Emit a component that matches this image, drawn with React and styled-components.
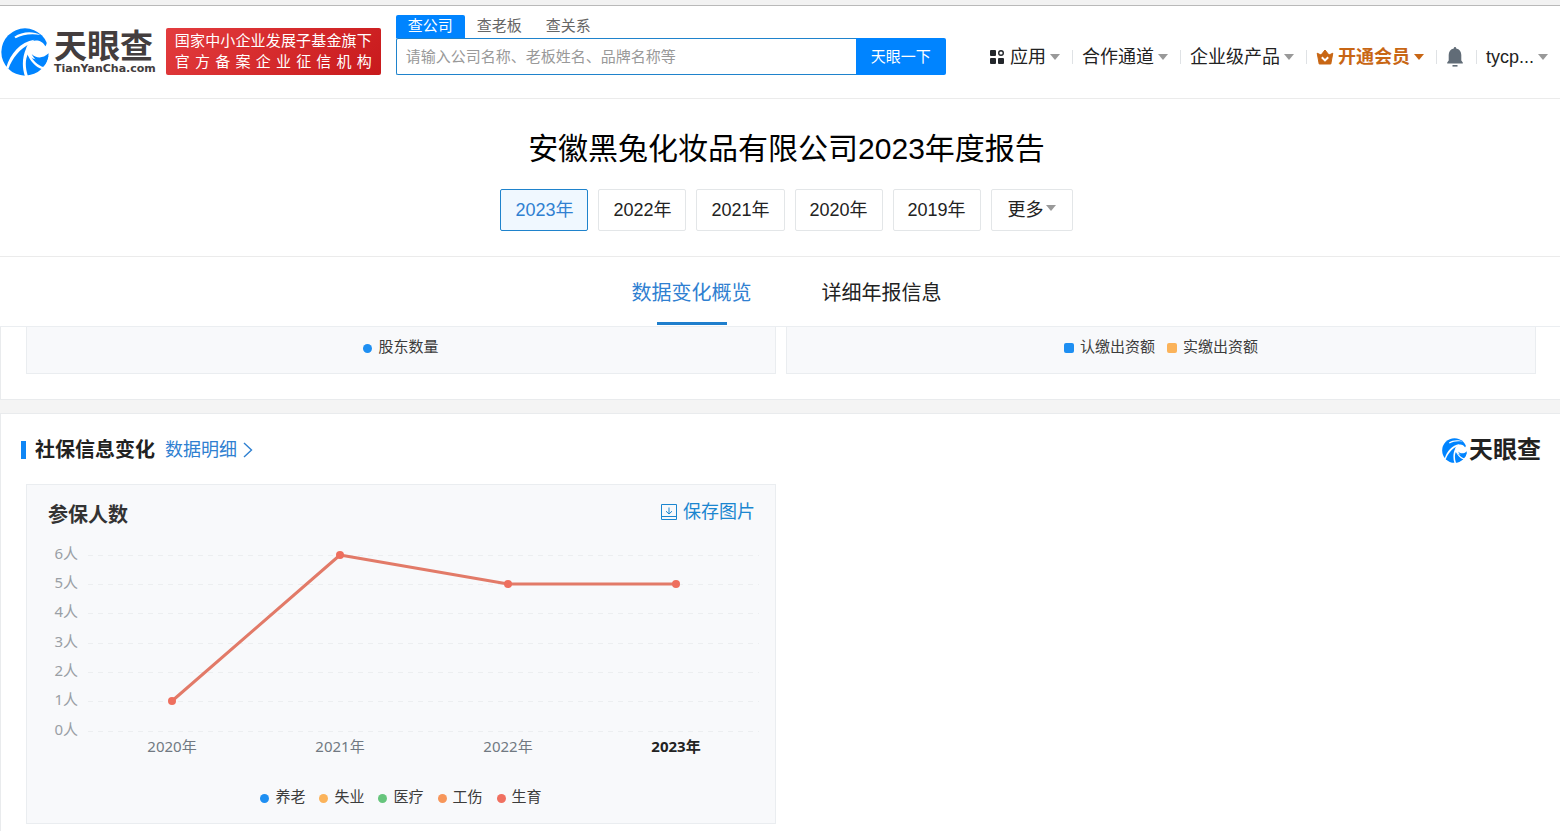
import React from "react";
import styled, { createGlobalStyle, css } from "styled-components";

const sans = `"Liberation Sans", "Noto Sans CJK SC", sans-serif`;
const noto = `"Noto Sans", "Noto Sans CJK SC", sans-serif`;

const GlobalStyle = createGlobalStyle`
  *, *::before, *::after { box-sizing: border-box; }
  html { scrollbar-width: none; }
  body { margin: 0; background: #f4f4f4; color: #222; font-family: ${sans}; }
  button, input { font-family: inherit; }
  button { cursor: pointer; }
  a { text-decoration: none; color: inherit; }
  h1, h2, h3, p, ul { margin: 0; padding: 0; }
  ul { list-style: none; }
  svg { display: block; flex: none; }
`;

const TopStrip = styled.div`
  height: 6px;
  background: #f2f2f2;
  border-bottom: 1px solid #b9b9b9;
`;

const Header = styled.header`
  display: flex;
  align-items: flex-end;
  padding: 9px 0 23px;
  background: #fff;
  border-bottom: 1px solid #ebebeb;
`;

const Brand = styled.a`
  display: flex;
  align-items: center;
  gap: 5px;
  height: 47px;
  padding-left: 1px;
`;

const BrandWords = styled.span`
  display: flex;
  flex-direction: column;
  padding-top: 3px;
  color: #433d3e;
`;

const BrandName = styled.span`
  font-size: 33px;
  line-height: 32px;
  font-weight: 700;
`;

const BrandDomain = styled.span`
  font: bold 11px/12px "DejaVu Sans", sans-serif;
`;

const Badge = styled.p`
  display: flex;
  flex-direction: column;
  width: 215px;
  height: 47px;
  margin-left: 10px;
  padding: 2px 9px;
  border-radius: 2px;
  background: linear-gradient(135deg, #e33c3e, #c81a1c);
  color: #fff;
  font-size: 15px;
  line-height: 21px;
  white-space: nowrap;
`;

const BadgeLine = styled.span`
  text-align: justify;
  text-align-last: justify;
`;

const Search = styled.form`
  width: 550px;
  margin-left: 15px;
`;

const SearchTabs = styled.div`
  display: flex;
`;

const SearchTab = styled.button`
  height: 23px;
  padding: 0 12px 2px;
  border: 0;
  border-radius: 2px 2px 0 0;
  background: ${(p) => (p.$active ? "#0084ff" : "transparent")};
  color: ${(p) => (p.$active ? "#fff" : "#666")};
  font-size: 15px;
  line-height: 21px;
`;

const SearchRow = styled.div`
  display: flex;
  height: 37px;
`;

const SearchInput = styled.input`
  flex: 1;
  min-width: 0;
  padding: 0 9px;
  border: 1px solid #1f83cc;
  border-right: 0;
  border-radius: 2px 0 0 2px;
  font-size: 15px;
  outline: 0;
  &::placeholder { color: #999; }
`;

const SearchButton = styled.button`
  width: 90px;
  padding: 0 0 2px;
  border: 0;
  border-radius: 0 2px 2px 0;
  background: #0084ff;
  color: #fff;
  font-size: 15px;
`;

const Nav = styled.nav`
  display: flex;
  align-items: center;
  height: 37px;
  margin-left: auto;
`;

const NavItem = styled.a`
  display: flex;
  align-items: center;
  gap: 4px;
  padding: 0 12px 0 9px;
  color: ${(p) => (p.$vip ? "#c86614" : "#222")};
  font-size: 18px;
  font-weight: ${(p) => (p.$vip ? 700 : 400)};
  line-height: 26px;
  white-space: nowrap;
`;

const Divider = styled.span`
  width: 1px;
  height: 14px;
  background: #dfe2e5;
`;

const Caret = styled.span`
  border: solid transparent;
  border-width: 6px 5px 0;
  border-top-color: ${(p) => (p.$vip ? "#c86614" : "#999")};
`;

const ReportHead = styled.section`
  display: flex;
  flex-direction: column;
  align-items: center;
  gap: 20px;
  padding: 30px 0 25px 13px;
  background: #fff;
  border-bottom: 1px solid #ebebeb;
`;

const ReportTitle = styled.h1`
  color: #000;
  font-size: 30px;
  font-weight: 400;
  line-height: 40px;
`;

const Years = styled.div`
  display: flex;
  gap: 10px;
`;

const YearButton = styled.button`
  display: flex;
  align-items: center;
  gap: 2px;
  height: 42px;
  padding: 0 ${(p) => (p.$more ? 16 : 14)}px 5px;
  border: 1px solid ${(p) => (p.$active ? "#1f83cc" : "#e3e6e8")};
  border-radius: 2px;
  background: ${(p) => (p.$active ? "#f0f8ff" : "#fff")};
  color: ${(p) => (p.$active ? "#2f80d1" : "#222")};
  font-size: 18px;
`;

const Tabs = styled.nav`
  display: flex;
  justify-content: center;
  gap: 70px;
  height: 70px;
  padding-left: 13px;
  background: #fff;
  border-bottom: 1px solid #ebeef1;
`;

const Tab = styled.a`
  display: flex;
  flex-direction: column;
  align-items: center;
  justify-content: space-between;
  padding: 21px 0 1px;
  color: ${(p) => (p.$active ? "#2f80d1" : "#222")};
  font-size: 20px;
  line-height: 30px;
  ${(p) =>
    p.$active &&
    css`
      &::after {
        content: "";
        width: 70px;
        height: 3px;
        background: #1f7fcd;
      }
    `}
`;

const Panel = styled.section`
  background: #fff;
  border: solid #e9ebed;
  border-width: ${(p) => (p.$continued ? "0 0 1px 1px" : "1px 0 0 1px")};
  padding: ${(p) => (p.$continued ? "0 24px 25px 25px" : "21px 24px 25px 25px")};
  margin-bottom: 13px;
`;

const CardGrid = styled.div`
  display: grid;
  grid-template-columns: 1fr 1fr;
  gap: 10px;
`;

const Card = styled.article`
  background: #f8f9fb;
  border: 1px solid #eaedf0;
  border-top-width: ${(p) => (p.$continued ? 0 : "1px")};
`;

const Legend = styled.ul`
  display: flex;
  justify-content: center;
  gap: ${(p) => p.$gap}px;
  padding: ${(p) => p.$pad};
  color: #3c3c3c;
  font-size: 15px;
  line-height: 20px;
`;

const LegendItem = styled.li`
  display: flex;
  align-items: center;
  gap: 6px;
  &::before {
    content: "";
    width: ${(p) => (p.$square ? 10 : 9)}px;
    height: ${(p) => (p.$square ? 10 : 9)}px;
    margin-top: 2px;
    border-radius: ${(p) => (p.$square ? "2px" : "50%")};
    background: ${(p) => p.$color};
  }
`;

const PanelHead = styled.div`
  display: flex;
  align-items: center;
  height: 30px;
  margin: 0 -5px 19px -5px;
`;

const PanelTitle = styled.h2`
  display: flex;
  align-items: center;
  gap: 9px;
  margin-right: 10px;
  font-size: 20px;
  line-height: 28px;
  &::before {
    content: "";
    width: 5px;
    height: 18px;
    background: #0f86f5;
  }
`;

const TextLink = styled.a`
  display: flex;
  align-items: center;
  gap: 6px;
  color: #2f80d1;
  font-size: 18px;
  line-height: 26px;
`;

const Watermark = styled.span`
  display: flex;
  align-items: center;
  gap: 2px;
  margin-left: auto;
  color: #222;
  font-size: 24px;
  font-weight: 700;
  line-height: 28px;
`;

const CardHead = styled.div`
  display: flex;
  justify-content: space-between;
  align-items: flex-start;
  padding: 14px 20px 11px 21px;
`;

const CardTitle = styled.h3`
  padding-top: 2px;
  color: #333;
  font: bold 20px/28px ${noto};
`;

const SaveButton = styled.button`
  display: flex;
  align-items: center;
  gap: 6px;
  padding: 0;
  border: 0;
  background: none;
  color: #1b86d0;
  font-size: 18px;
  line-height: 26px;
`;

const Plot = styled.svg`
  width: 100%;
  height: auto;
`;

const AxisText = styled.text`
  fill: ${(p) => (p.$strong ? "#222" : p.$muted ? "#9a9fa5" : "#717982")};
  font: ${(p) => (p.$strong ? 700 : 400)} 15px ${noto};
  text-anchor: ${(p) => (p.$muted ? "end" : "middle")};
`;

function Swirl({ size }) {
  return (
    <svg width={size} height={size} viewBox="0 0 144 144" aria-hidden="true">
      <circle cx="72" cy="72" r="71" fill="#0084ff" />
      <g fill="#fff">
        <path d="M133 55 C130 66 134 74 150 82 L152 30 L134 26 C140 36 139 46 133 55 Z" />
        <path d="M133 55 C124 36 98 32 84 46 C73 57 73 70 80 80 C92 94 112 98 128 92 L150 80 L140 56 Z" />
        <path d="M40 26 C62 10 98 8 118 21 C92 16 66 19 44 31 Z" />
        <path d="M100 35 C58 42 28 76 16 118 L22 123 C34 90 56 62 88 47 Z" />
        <path d="M76 60 C64 86 62 116 72 146 L81 145 C72 118 72 94 82 76 Z" />
        <path d="M79 78 C87 98 103 117 124 124 L129 118 C110 112 96 98 87 82 Z" />
      </g>
      <path d="M92 78 C104 90 124 94 143 76 C142 90 138 102 131 112 C114 106 100 94 92 78 Z" fill="#0084ff" />
    </svg>
  );
}

const AppsIcon = () => (
  <svg width="16" height="16" viewBox="0 0 16 16" aria-hidden="true">
    <g fill="#22262b">
      <rect x="0" y="1" width="6" height="6" rx="1" />
      <rect x="0" y="9" width="6" height="6" rx="1" />
      <rect x="8" y="9" width="6" height="6" rx="1" />
    </g>
    <circle cx="11" cy="4" r="2.3" fill="none" stroke="#22262b" strokeWidth="1.4" />
  </svg>
);

const CrownIcon = () => (
  <svg width="18" height="16" viewBox="0 0 18 16" aria-hidden="true">
    <path
      d="M1.2 4.2 L5 6 L9 1 L13 6 L16.8 4.2 L14.8 15 H3.2 Z"
      fill="#c86614"
      stroke="#c86614"
      strokeLinejoin="round"
    />
    <path d="M5.8 8.2 L9 11.4 L12.2 8.2" fill="none" stroke="#fff" strokeWidth="2" />
  </svg>
);

const BellIcon = () => (
  <svg width="18" height="20" viewBox="0 0 18 20" aria-hidden="true">
    <path
      d="M9 0 C9.8 0 10.2 .6 10.2 1.4 C13.6 2 15.3 4.7 15.3 8 V13.6 L16.8 15.4 V16.4 H1.2 V15.4 L2.7 13.6 V8 C2.7 4.7 4.4 2 7.8 1.4 C7.8 .6 8.2 0 9 0 Z"
      fill="#616c77"
    />
    <rect x="6.5" y="18" width="5" height="1.6" fill="#616c77" />
  </svg>
);

const ChevronIcon = () => (
  <svg width="10" height="16" viewBox="0 0 10 16" aria-hidden="true">
    <path d="M1 1 L8.5 8 L1 15" fill="none" stroke="#2f80d1" strokeWidth="1.4" />
  </svg>
);

const SaveIcon = () => (
  <svg width="16" height="16" viewBox="0 0 16 16" aria-hidden="true">
    <path
      d="M.5 .5 H15.5 V15.5 H.5 Z M.5 12.5 H15.5 M8 3.5 V10 M5 7.2 L8 10 L11 7.2"
      fill="none"
      stroke="#1b86d0"
    />
  </svg>
);

const years = ["2023年", "2022年", "2021年", "2020年", "2019年"];

const insurance = [
  { label: "养老", color: "#1e8ff2" },
  { label: "失业", color: "#fbb35a" },
  { label: "医疗", color: "#66c57c" },
  { label: "工伤", color: "#f7965a" },
  { label: "生育", color: "#f07060" },
];

const series = [
  { year: "2020年", value: 1 },
  { year: "2021年", value: 6 },
  { year: "2022年", value: 5 },
  { year: "2023年", value: 5 },
];

const levelY = [191, 161, 132, 103, 73, 44, 15];
const pointX = (i) => 145 + i * 168;

function InsuranceChart() {
  const points = series.map((d, i) => [pointX(i), levelY[d.value]]);
  return (
    <Plot viewBox="0 0 748 222" role="img" aria-label="参保人数">
      {levelY.map((y, n) => (
        <g key={n}>
          <path d={`M61 ${y + 0.5} H732`} stroke="#eceef0" strokeDasharray="5 5" />
          <AxisText $muted x="51" y={y + 4}>{`${n}人`}</AxisText>
        </g>
      ))}
      <polyline
        points={points.map((p) => p.join(",")).join(" ")}
        fill="none"
        stroke="#e27a68"
        strokeWidth="3"
        strokeLinejoin="round"
      />
      {points.map(([x, y], i) => (
        <g key={i}>
          <circle cx={x} cy={y} r="4" fill="#ee6f5e" />
          <AxisText $strong={i === points.length - 1} x={x} y="212">
            {series[i].year}
          </AxisText>
        </g>
      ))}
    </Plot>
  );
}

export default function App() {
  return (
    <>
      <GlobalStyle />
      <TopStrip />
      <Header>
        <Brand href="#">
          <Swirl size={48} />
          <BrandWords>
            <BrandName>天眼查</BrandName>
            <BrandDomain>TianYanCha.com</BrandDomain>
          </BrandWords>
        </Brand>
        <Badge>
          <BadgeLine>国家中小企业发展子基金旗下</BadgeLine>
          <BadgeLine>官 方 备 案 企 业 征 信 机 构</BadgeLine>
        </Badge>
        <Search onSubmit={(e) => e.preventDefault()}>
          <SearchTabs>
            <SearchTab type="button" $active>查公司</SearchTab>
            <SearchTab type="button">查老板</SearchTab>
            <SearchTab type="button">查关系</SearchTab>
          </SearchTabs>
          <SearchRow>
            <SearchInput
              type="text"
              aria-label="搜索"
              placeholder="请输入公司名称、老板姓名、品牌名称等"
            />
            <SearchButton type="submit">天眼一下</SearchButton>
          </SearchRow>
        </Search>
        <Nav>
          <NavItem href="#"><AppsIcon />应用<Caret /></NavItem>
          <Divider />
          <NavItem href="#">合作通道<Caret /></NavItem>
          <Divider />
          <NavItem href="#">企业级产品<Caret /></NavItem>
          <Divider />
          <NavItem href="#" $vip><CrownIcon />开通会员<Caret $vip /></NavItem>
          <Divider />
          <NavItem href="#" aria-label="消息"><BellIcon /></NavItem>
          <Divider />
          <NavItem href="#">tycp...<Caret /></NavItem>
        </Nav>
      </Header>

      <ReportHead>
        <ReportTitle>安徽黑兔化妆品有限公司2023年度报告</ReportTitle>
        <Years>
          {years.map((y, i) => (
            <YearButton key={y} type="button" $active={i === 0}>{y}</YearButton>
          ))}
          <YearButton type="button" $more>更多<Caret /></YearButton>
        </Years>
      </ReportHead>

      <Tabs>
        <Tab href="#overview" $active>数据变化概览</Tab>
        <Tab href="#detail">详细年报信息</Tab>
      </Tabs>

      <main>
        <Panel $continued>
          <CardGrid>
            <Card $continued>
              <Legend $gap={12} $pad="10px 0 16px">
                <LegendItem $color="#1e8ff2">股东数量</LegendItem>
              </Legend>
            </Card>
            <Card $continued>
              <Legend $gap={12} $pad="10px 0 16px">
                <LegendItem $square $color="#1e8ff2">认缴出资额</LegendItem>
                <LegendItem $square $color="#fbb35a">实缴出资额</LegendItem>
              </Legend>
            </Card>
          </CardGrid>
        </Panel>

        <Panel>
          <PanelHead>
            <PanelTitle>社保信息变化</PanelTitle>
            <TextLink href="#detail">数据明细<ChevronIcon /></TextLink>
            <Watermark><Swirl size={25} />天眼查</Watermark>
          </PanelHead>
          <CardGrid>
            <Card>
              <CardHead>
                <CardTitle>参保人数</CardTitle>
                <SaveButton type="button"><SaveIcon />保存图片</SaveButton>
              </CardHead>
              <InsuranceChart />
              <Legend $gap={14} $pad="25px 0 16px">
                {insurance.map((s) => (
                  <LegendItem key={s.label} $color={s.color}>{s.label}</LegendItem>
                ))}
              </Legend>
            </Card>
          </CardGrid>
        </Panel>
      </main>
    </>
  );
}
